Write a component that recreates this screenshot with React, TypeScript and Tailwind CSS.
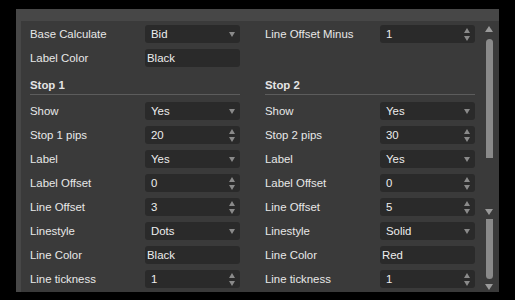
import React from "react";

type Field = {
  label: string;
  value: string;
  kind: "select" | "spin" | "text";
};

const stop1: Field[] = [
  { label: "Show", value: "Yes", kind: "select" },
  { label: "Stop 1 pips", value: "20", kind: "spin" },
  { label: "Label", value: "Yes", kind: "select" },
  { label: "Label Offset", value: "0", kind: "spin" },
  { label: "Line Offset", value: "3", kind: "spin" },
  { label: "Linestyle", value: "Dots", kind: "select" },
  { label: "Line Color", value: "Black", kind: "text" },
  { label: "Line tickness", value: "1", kind: "spin" },
];

const stop2: Field[] = [
  { label: "Show", value: "Yes", kind: "select" },
  { label: "Stop 2 pips", value: "30", kind: "spin" },
  { label: "Label", value: "Yes", kind: "select" },
  { label: "Label Offset", value: "0", kind: "spin" },
  { label: "Line Offset", value: "5", kind: "spin" },
  { label: "Linestyle", value: "Solid", kind: "select" },
  { label: "Line Color", value: "Red", kind: "text" },
  { label: "Line tickness", value: "1", kind: "spin" },
];

function Caret({ up = false }: { up?: boolean }) {
  return (
    <svg width="6" height="5" viewBox="0 0 6 5" className="block">
      <path d={up ? "M0 5 L3 0 L6 5 Z" : "M0 0 L6 0 L3 5 Z"} fill="#8a8a8a" />
    </svg>
  );
}

function Row({ field }: { field: Field }) {
  return (
    <div className="flex items-center h-[18px] leading-[19px]">
      <div className="w-[115px] text-[#e8e8e8]">{field.label}</div>
      <div
        className={
          "relative w-[95px] h-[18px] rounded-[3px] bg-[#2a2a2a] text-[#ededed] " +
          (field.kind === "text" ? "pl-[2px]" : "pl-[6px]")
        }
      >
        {field.value}
        {field.kind === "select" && (
          <div className="absolute right-[5px] top-[7px]">
            <Caret />
          </div>
        )}
        {field.kind === "spin" && (
          <div className="absolute right-[5px] top-[3px] flex flex-col gap-[3px]">
            <Caret up />
            <Caret />
          </div>
        )}
      </div>
    </div>
  );
}

function Section({ title, fields }: { title: string; fields: Field[] }) {
  return (
    <>
      <div className="mt-[9px] h-[19px] leading-[19px] font-bold text-[#e4e4e4] border-b border-[#5c5c5c]">
        {title}
      </div>
      <div className="mt-[7px] flex flex-col gap-[6px]">
        {fields.map((f, i) => (
          <Row key={i} field={f} />
        ))}
      </div>
    </>
  );
}

export default function App() {
  return (
    <div
      className="w-[515px] h-[300px] bg-black pt-[9px] pl-[16px] text-[11.4px]"
      style={{ fontFamily: '"Liberation Sans", Arial, sans-serif' }}
    >
      <div className="w-[483px] h-[283px] bg-[#474747] pt-[12px] pl-[5px]">
        <div className="h-[271px] bg-[#3a3a3a] flex pl-[9px] pt-[4px]">
          {/* left column */}
          <div className="w-[210px] flex flex-col">
            <div className="flex flex-col gap-[6px]">
              <Row field={{ label: "Base Calculate", value: "Bid", kind: "select" }} />
              <Row field={{ label: "Label Color", value: "Black", kind: "text" }} />
            </div>
            <Section title="Stop 1" fields={stop1} />
          </div>

          {/* right column */}
          <div className="w-[210px] ml-[25px] flex flex-col">
            <div className="flex flex-col gap-[6px]">
              <Row field={{ label: "Line Offset Minus", value: "1", kind: "spin" }} />
              <div className="h-[18px]" />
            </div>
            <Section title="Stop 2" fields={stop2} />
          </div>

          {/* scrollbar */}
          <div className="ml-[10px] w-[8px] flex flex-col items-center">
            <div className="mt-[1px]">
              <svg width="8" height="6" viewBox="0 0 8 6">
                <path d="M0 6 L4 0 L8 6 Z" fill="#9a9a9a" />
              </svg>
            </div>
            <div className="mt-[7px] w-[7px] h-[119px] rounded-t-[4px] bg-[#8a8a8a]" />
            <div className="mt-[51px]">
              <svg width="8" height="6" viewBox="0 0 8 6">
                <path d="M0 0 L8 0 L4 6 Z" fill="#9a9a9a" />
              </svg>
            </div>
            <div className="mt-[4px] w-[7px] h-[60px] rounded-b-[4px] bg-[#8a8a8a]" />
            <div className="mt-[5px]">
              <svg width="8" height="6" viewBox="0 0 8 6">
                <path d="M0 0 L8 0 L4 6 Z" fill="#9a9a9a" />
              </svg>
            </div>
          </div>
        </div>
      </div>
    </div>
  );
}
